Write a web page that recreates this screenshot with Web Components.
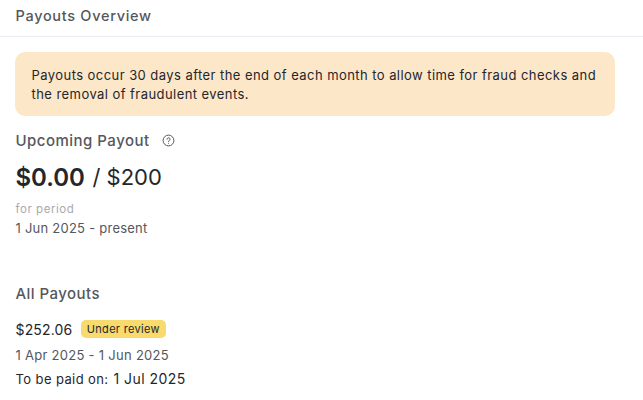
<!DOCTYPE html>
<html>
<head>
<meta charset="utf-8">
<style>
  html, body { margin: 0; background: #fff; }
  body { font-family: Inter, "Liberation Sans", sans-serif; overflow: hidden; height: 400px; }
</style>
</head>
<body>
<payouts-overview></payouts-overview>

<template id="overview-tpl">
  <style>
    :host { display: block; color: #24262b; }
    .header {
      height: 31px;
      padding: 0 15px 5px 15.5px;
      border-bottom: 1px solid #ebebf3;
      display: flex;
      align-items: center;
      font-size: 14.5px;
      font-weight: 500;
      letter-spacing: .7px;
      color: #55575c;
    }
    .body { padding: 15px 28px 0 15px; }
  </style>
  <div class="header">Payouts Overview</div>
  <div class="body">
    <notice-box>Payouts occur 30 days after the end of each month to allow time for fraud checks and the removal of fraudulent events.</notice-box>
    <upcoming-payout></upcoming-payout>
    <all-payouts></all-payouts>
  </div>
</template>

<template id="notice-tpl">
  <style>
    :host {
      display: block;
      background: #fde7c9;
      border-radius: 10px;
      padding: 14px 16px 12px 16.5px;
      font-size: 13px;
      line-height: 19px;
      letter-spacing: .44px;
      color: #24262b;
    }
  </style>
  <slot></slot>
</template>

<template id="upcoming-tpl">
  <style>
    :host { display: block; margin-top: 14px; padding-left: .5px; }
    .title {
      display: flex;
      align-items: center;
      gap: 12px;
      height: 20px;
      font-size: 15px;
      font-weight: 500;
      letter-spacing: .48px;
      color: #55575c;
    }
    svg { display: block; }
    .amount {
      margin-top: 11px;
      height: 32px;
      display: flex;
      align-items: center;
      font-size: 22px;
      color: #24262b;
    }
    .amount b { font-size: 24px; font-weight: 600; margin-right: 7.5px; }
    .label { margin-top: 8px; font-size: 11.5px; line-height: 16px; letter-spacing: .55px; color: #a9a9ad; }
    .period { margin-top: 2px; font-size: 13px; line-height: 18px; letter-spacing: .24px; color: #55575c; }
  </style>
  <div class="title">
    <span>Upcoming Payout</span>
    <svg width="13" height="13" viewBox="0 0 13 13" fill="none" stroke="#55575c">
      <circle cx="6.5" cy="6.5" r="5.4"/>
      <path d="M5 5.2a1.5 1.5 0 1 1 2.4 1.2c-.6.3-.9.6-.9 1.1" stroke-linecap="round"/>
      <circle cx="6.5" cy="9.3" r=".5" fill="#55575c" stroke="none"/>
    </svg>
  </div>
  <div class="amount"><b>$0.00</b>/ $200</div>
  <div class="label">for period</div>
  <div class="period">1 Jun 2025 - present</div>
</template>

<template id="all-tpl">
  <style>
    :host { display: block; margin-top: 47px; padding-left: .5px; }
    .title { font-size: 15px; font-weight: 500; letter-spacing: .45px; line-height: 20px; color: #55575c; }
    .row { margin-top: 15px; display: flex; align-items: center; gap: 8.5px; height: 20px; font-size: 14px; letter-spacing: .15px; color: #24262b; }
    .dates { margin-top: 7px; font-size: 13px; line-height: 18px; letter-spacing: .28px; color: #55575c; }
    .paid { margin-top: 5px; font-size: 13px; line-height: 20px; letter-spacing: .4px; color: #24262b; }
    .paid span { font-size: 14px; letter-spacing: .45px; margin-left: 1px; }
  </style>
  <div class="title">All Payouts</div>
  <div class="row">$252.06 <status-tag>Under review</status-tag></div>
  <div class="dates">1 Apr 2025 - 1 Jun 2025</div>
  <div class="paid">To be paid on: <span>1 Jul 2025</span></div>
</template>

<template id="tag-tpl">
  <style>
    :host {
      display: inline-block;
      background: #f8da6d;
      border-radius: 5px;
      padding: 0 6.5px 0 6px;
      font-size: 11px;
      line-height: 18px;
      letter-spacing: .3px;
      color: #24262b;
    }
  </style>
  <slot></slot>
</template>

<script>
function stamp(name, tplId) {
  customElements.define(name, class extends HTMLElement {
    connectedCallback() {
      if (this.shadowRoot) return
      let shadowRoot = this.attachShadow({mode: 'open'})
      shadowRoot.appendChild(document.getElementById(tplId).content.cloneNode(true))
    }
  })
}
stamp('notice-box', 'notice-tpl')
stamp('status-tag', 'tag-tpl')
stamp('upcoming-payout', 'upcoming-tpl')
stamp('all-payouts', 'all-tpl')
stamp('payouts-overview', 'overview-tpl')
</script>
</body>
</html>
